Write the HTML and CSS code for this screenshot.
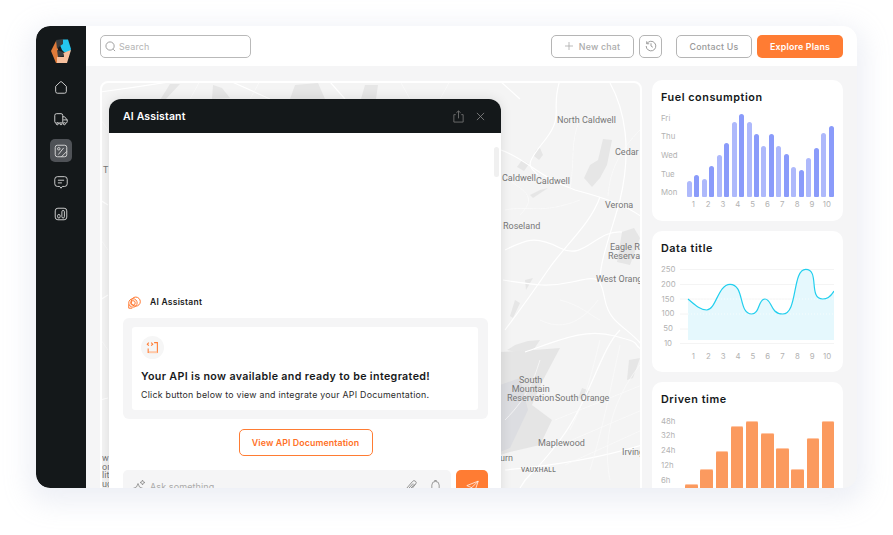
FILE: index.html
```html
<!DOCTYPE html>
<html lang="en">
<head>
<meta charset="utf-8">
<title>AI Assistant</title>
<link rel="stylesheet" href="styles.css">
</head>
<body>
<div class="frame">
  <aside class="sidebar">
    <svg class="logo" viewBox="0 0 20 24">
      <polygon points="5,2 0,12 5,24 7,24 7,2" fill="#e07b3a"/>
      <polygon points="9,6 12,0.500 17,0.500 20,10 19,13 13,13 11,11" fill="#24c5ee"/>
      <polygon points="12,14 20,11 16,24 6,24 6,18 13,18" fill="#f6bf9d"/>
      <polygon points="5,1 12,0 12,5 9,7 6,10" fill="#3a3d3f"/>
      <polygon points="6,11 12,13 13,17 7,18" fill="#3a3d3f"/>
    </svg>
    <nav class="nav">
      <a class="nav-item"><svg viewBox="0 0 18 18" class="nav-icon"><path d="M3 8.200 8 3.400a1.500 1.500 0 0 1 2 0l5 4.800V14a2 2 0 0 1-2 2H5a2 2 0 0 1-2-2Z"/></svg></a>
      <a class="nav-item"><svg viewBox="0 0 18 18" class="nav-icon"><path d="M3.500 13.500a1.500 1.500 0 0 1-1.500-1.500V5a2 2 0 0 1 2-2h5a2 2 0 0 1 2 2v8.500M11 6.500h2l3 3.500v2a1.500 1.500 0 0 1-1.500 1.500H14M5 13.500h3M11 13.500h.8M11.500 10H16"/><circle cx="4.800" cy="14.300" r="1.200"/><circle cx="9" cy="14.300" r="1.200"/><circle cx="12.800" cy="14.300" r="1.200"/></svg></a>
      <a class="nav-item active"><svg viewBox="0 0 18 18" class="nav-icon"><rect x="2.500" y="2.500" width="13" height="13" rx="2.500"/><path d="M12 5.500 6 13"/><circle cx="6.500" cy="6.500" r="1.400"/><path d="M9.500 15.500 15.500 9.500"/></svg></a>
      <a class="nav-item"><svg viewBox="0 0 18 18" class="nav-icon"><path d="M5 3h8a3 3 0 0 1 3 3v5a3 3 0 0 1-3 3h-2.500L9 16l-1.500-2H5a3 3 0 0 1-3-3V6a3 3 0 0 1 3-3Z"/><path d="M5.500 7h7M5.500 10h4.500"/></svg></a>
      <a class="nav-item"><svg viewBox="0 0 18 18" class="nav-icon"><rect x="2.500" y="2.500" width="13" height="13" rx="3"/><rect x="5.200" y="9.500" width="2.800" height="4" rx="1.400"/><rect x="10" y="5" width="2.800" height="8.500" rx="1.400"/></svg></a>
    </nav>
  </aside>

  <div class="main">
    <header class="topbar">
      <label class="search">
        <svg viewBox="0 0 12 12" class="search-icon"><circle cx="5.500" cy="5.500" r="4.500"/><path d="m9 9 2 2"/></svg>
        <span>Search</span>
      </label>
      <div class="top-actions">
        <div class="btn-group">
          <button class="btn new-chat"><svg viewBox="0 0 10 10" class="plus"><path d="M5 0v10M0 5h10"/></svg>New chat</button>
          <button class="btn history"><svg viewBox="0 0 14 14" class="hist-icon"><path d="M2.200 4.200A5.600 5.600 0 1 1 1.400 7M2 1.500v2.900h2.900M7 3.800V7l2.200 1.500"/></svg></button>
        </div>
        <div class="btn-group">
          <button class="btn contact">Contact Us</button>
          <button class="btn explore">Explore Plans</button>
        </div>
      </div>
    </header>

    <div class="content">
      <section class="map">
        <div class="map-layer">
        <svg class="map-art" viewBox="100 81 542 420">
          <g class="patch">
            <path d="M603 139 612 140 607 165 600 178 592 187 584 178 590 165 598 160Z"/>
            <path d="M622 232 634 228 640 238 630 265 617 262Z"/>
            <path d="M536 150 540 148 543 155 539 160 534 156Z"/>
            <path d="M522 160 529 164 524 171 517 167Z"/>
            <path d="M540 190 548 188 533 198 530 195Z"/>
            <path d="M528 341 540 340 530 355 507 350 515 345Z"/>
            <path d="M525 280 533 278 526 290Z"/>
            <path d="M515 300 520 303 513 318 510 316Z"/>
            <path d="M629 360 640 358 633 378 627 380Z"/>
            <path d="M582 388 590 391 585 400 578 398Z"/>
            <path d="M170 84 180 84 165 100 160 100Z"/>
            <path d="M213 85 222 88 230 98 212 99Z"/>
            <path d="M295 85 318 83 325 99 290 99Z"/>
            <path d="M365 85 378 85 376 99 361 99Z"/>
          </g>
          <path class="patch-wide" d="M500 352 534 350 560 348 542 382 532 405 552 420 540 445 510 452 500 455Z"/>
          <path class="patch-dark" d="M500 385 520 378 528 410 510 448 500 452Z"/>
          <g class="road">
            <path d="M501 150C525 158 540 178 575 190 605 198 625 205 642 217"/>
            <path d="M560 80C550 110 565 115 545 140S528 165 538 175"/>
            <path d="M503 280C530 284 545 288 572 282S600 276 605 300 625 325 642 345"/>
            <path d="M525 352C560 340 585 328 615 336S630 342 642 350"/>
            <path d="M600 197C590 225 565 245 548 270S520 310 505 330"/>
            <path d="M505 250C525 240 535 235 560 248S595 230 622 232"/>
            <path d="M610 83C625 110 632 150 620 200 612 230 600 260 600 280"/>
            <path d="M620 330C600 350 590 400 560 440S530 470 520 488"/>
            <path d="M505 470C560 465 610 455 642 445"/>
            <path d="M100 92C130 88 150 85 175 81M230 81 270 99M330 82 345 99M500 81 520 99"/>
            <path d="M100 200 108 205M100 300 108 295M100 400 108 398"/>
          </g>
          <g class="minor">
            <path d="M580 120C570 140 575 160 570 190M640 130C620 150 610 170 608 196M505 210C530 205 540 215 580 200"/>
            <path d="M510 180C520 190 540 195 520 215M560 300C580 305 590 315 600 320M540 320C560 330 580 325 598 300"/>
            <path d="M600 340C590 380 585 400 570 430M620 345C610 390 605 420 590 470M640 365C620 390 600 430 610 480"/>
            <path d="M555 420 642 385M560 445 642 410M565 465 642 430M540 360C535 375 530 395 505 420"/>
            <path d="M200 81 190 99M260 81 250 99M400 81 410 99M450 81 440 99M101 120 108 130M101 240 108 250M101 340 108 350"/>
          </g>
        </svg>
        <span class="pin" style="left:457px;top:35px">North Caldwell</span>
        <span class="pin" style="left:515px;top:67px">Cedar</span>
        <span class="pin" style="left:402px;top:93px">Caldwell</span>
        <span class="pin" style="left:436px;top:96px">Caldwell</span>
        <span class="pin" style="left:505px;top:120px">Verona</span>
        <span class="pin" style="left:403px;top:141px">Roseland</span>
        <span class="pin" style="left:510px;top:162px">Eagle Rock</span>
        <span class="pin" style="left:508px;top:171px">Reservation</span>
        <span class="pin" style="left:496px;top:194px">West Orange</span>
        <span class="pin centered" style="left:407px;top:295px">South<br>Mountain<br>Reservation</span>
        <span class="pin" style="left:455px;top:313px">South Orange</span>
        <span class="pin" style="left:438px;top:358px">Maplewood</span>
        <span class="pin" style="left:522px;top:367px">Irvington</span>
        <span class="pin" style="left:400px;top:373px">urn</span>
        <span class="pin small" style="left:421px;top:385px">VAUXHALL</span>
        <span class="pin" style="left:3px;top:85px">T</span>
        <span class="pin edge" style="left:2px;top:373px">w</span>
        <span class="pin edge" style="left:2px;top:382px">on</span>
        <span class="pin edge" style="left:2px;top:390px">lit</span>
        <span class="pin edge" style="left:2px;top:399px">ug</span>

        <div class="chat">
          <div class="chat-head">
            <h2>AI Assistant</h2>
            <div class="chat-tools">
              <svg viewBox="0 0 14 14" class="tool-icon"><path d="M4 5H2v8h10V5h-2M7 9V1M4.700 3 7 1l2.300 2"/></svg>
              <svg viewBox="0 0 10 10" class="close-icon"><path d="m1 1 8 8M9 1 1 9"/></svg>
            </div>
          </div>
          <div class="thumb"></div>
          <div class="chat-body">
            <div class="sender">
              <svg viewBox="0 0 16 14" class="sender-icon"><circle cx="10" cy="6" r="5.200"/><circle cx="6.800" cy="7.500" r="4.800"/><circle cx="6.800" cy="7.500" r="2.600"/><path d="M2 9v4.500h4"/></svg>
              <span>AI Assistant</span>
            </div>
            <div class="message">
              <div class="message-card">
                <div class="msg-badge"><svg viewBox="0 0 12 12" class="msg-icon"><path d="M7.500 1.500H10.500V10.500H2V7"/><path class="pale" d="M2.500 10.500H10.500"/><path d="m2.600 1.500-1.400 1.400 1.400 1.400M4.800 1.500l1.400 1.400-1.400 1.400"/></svg></div>
                <h3>Your API is now available and ready to be integrated!</h3>
                <p>Click button below to view and integrate your API Documentation.</p>
              </div>
            </div>
            <button class="doc-btn">View API Documentation</button>
            <div class="composer">
              <div class="input">
                <svg viewBox="0 0 14 14" class="spark"><path d="M6 4.500 7.500 8 11 9.500 7.500 11 6 13.500 4.500 11 1 9.500 4.500 8ZM10.500 1l.7 1.800L13 3.500l-1.800.7-.7 1.800-.7-1.800L8 3.500l1.800-.7Z"/></svg>
                <span class="placeholder">Ask something</span>
                <svg viewBox="0 0 12 14" class="clip"><path d="M1.500 9.500 7.500 2.500a2 2 0 0 1 3.200 2.500L5 12a1.300 1.300 0 0 1-2.200-1.500L8 4.500M4 11.500l5.500-6.500"/></svg>
                <svg viewBox="0 0 12 14" class="bell"><path d="M2 10.500V6a4 4 0 0 1 8 0v4.500l1 1.500H1ZM5 2V1h2v1"/></svg>
              </div>
              <button class="send"><svg viewBox="0 0 16 14" class="send-icon"><path d="M1 6.500 15 1 11 13 7 9 1 6.500ZM15 1 7 9l-.5 4 2-2.500"/></svg></button>
            </div>
          </div>
        </div>
        </div>
      </section>

      <div class="cards">
        <section class="card card-fuel">
          <h2 class="card-title">Fuel consumption</h2>
          <div class="fuel-chart">
            <div class="fuel-y"><span>Fri</span><span>Thu</span><span>Wed</span><span>Tue</span><span>Mon</span></div>
            <div class="fuel-bars">
              <i class="b-l" style="height:16px"></i><i class="b-d" style="height:22px"></i>
              <i class="b-l" style="height:18px"></i><i class="b-d" style="height:31px"></i>
              <i class="b-l" style="height:42px"></i><i class="b-d" style="height:54px"></i>
              <i class="b-l" style="height:75px"></i><i class="b-d" style="height:83px"></i>
              <i class="b-l" style="height:75px"></i><i class="b-d" style="height:63px"></i>
              <i class="b-l" style="height:51px"></i><i class="b-d" style="height:63px"></i>
              <i class="b-l" style="height:51px"></i><i class="b-d" style="height:43px"></i>
              <i class="b-l" style="height:30px"></i><i class="b-d" style="height:27px"></i>
              <i class="b-l" style="height:39px"></i><i class="b-d" style="height:49px"></i>
              <i class="b-l" style="height:64px"></i><i class="b-d" style="height:71px"></i>
            </div>
            <div class="x-axis fuel-x"><span>1</span><span>2</span><span>3</span><span>4</span><span>5</span><span>6</span><span>7</span><span>8</span><span>9</span><span>10</span></div>
          </div>
        </section>

        <section class="card card-data">
          <h2 class="card-title">Data title</h2>
          <div class="line-chart">
            <div class="line-y"><span>250</span><span>200</span><span>150</span><span>100</span><span>50</span><span>10</span></div>
            <svg viewBox="680 265 154 80" class="line-svg">
              <path class="grid" d="M680 269.500H834M680 284.500H834M680 299H834M680 314H834M680 329H834M680 343.500H834"/>
              <path class="area" d="M688 299C695 305 700 310 706.700 310 716 310 718 284.300 730 284.300 745 284.300 738 314 751.700 314 760 314 758 299 765 299 772 299 770 314 782.700 314 798 314 792 269.300 805.700 269.300 820 269.300 808 299 822.700 299 828 299 831 296 834 291V340H688Z"/>
              <path class="dots" d="M688 299H834M688 314H834"/>
              <path class="curve" d="M688 299C695 305 700 310 706.700 310 716 310 718 284.300 730 284.300 745 284.300 738 314 751.700 314 760 314 758 299 765 299 772 299 770 314 782.700 314 798 314 792 269.300 805.700 269.300 820 269.300 808 299 822.700 299 828 299 831 296 834 291"/>
            </svg>
            <div class="x-axis line-x"><span>1</span><span>2</span><span>3</span><span>4</span><span>5</span><span>6</span><span>7</span><span>8</span><span>9</span><span>10</span></div>
          </div>
        </section>

        <section class="card card-time">
          <h2 class="card-title">Driven time</h2>
          <div class="time-chart">
            <div class="time-y"><span>48h</span><span>32h</span><span>24h</span><span>12h</span><span>6h</span></div>
            <div class="time-bars">
              <i style="height:11px"></i><i style="height:26px"></i><i style="height:44px"></i><i style="height:69px"></i><i style="height:74px"></i>
              <i style="height:62px"></i><i style="height:47px"></i><i style="height:26px"></i><i style="height:57px"></i><i style="height:74px"></i>
            </div>
          </div>
        </section>
      </div>
    </div>
  </div>
</div>
</body>
</html>
```

FILE: styles.css
```css
* { box-sizing: border-box; }
html, body { height: 100%; }
body {
  margin: 0;
  background: #fff;
  font-family: "Inter", "Liberation Sans", sans-serif;
  overflow: hidden;
}
h2, h3, p { margin: 0; }
button { font-family: inherit; cursor: pointer; }

.frame {
  display: flex;
  width: 821px;
  height: 462px;
  margin: 26px 0 0 36px;
  border-radius: 14px;
  overflow: hidden;
  background: #f5f5f6;
  box-shadow: 0 8px 26px 8px rgba(235, 237, 245, .85);
}

/* sidebar */
.sidebar {
  flex: 0 0 50px;
  display: flex;
  flex-direction: column;
  align-items: center;
  padding-top: 13px;
  background: #14181a;
  border-radius: 14px 0 0 14px;
}
.logo { width: 20px; height: 24px; display: block; }
.nav { display: flex; flex-direction: column; gap: 9.200px; margin-top: 13px; }
.nav-item { display: flex; align-items: center; justify-content: center; width: 22px; height: 22.500px; border-radius: 5px; }
.nav-item.active { background: #4f5257; }
.nav-icon { width: 16px; height: 16px; fill: none; stroke: #e0e0e0; stroke-width: 1; }

/* topbar */
.main { flex: 1; display: flex; flex-direction: column; min-width: 0; }
.topbar {
  flex: 0 0 40px;
  display: flex;
  align-items: center;
  justify-content: space-between;
  padding: 0 14px;
  background: #fff;
}
.search {
  display: flex;
  align-items: center;
  gap: 3px;
  width: 151px;
  height: 23px;
  padding-left: 4px;
  border: 1px solid #b9b9b9;
  border-radius: 5px;
  color: #b4b4b4;
  font-size: 9px;
  letter-spacing: .1px;
}
.search-icon { width: 11px; height: 11px; fill: none; stroke: #8d8d8d; stroke-width: .9; }
.top-actions { display: flex; gap: 14px; }
.btn-group { display: flex; gap: 5px; }
.btn {
  height: 23px;
  padding: 0;
  display: flex;
  align-items: center;
  justify-content: center;
  border: 1px solid #b5b5b5;
  border-radius: 5px;
  background: #fff;
  color: #9a9a9a;
  font-size: 8.800px;
  font-weight: 500;
  letter-spacing: .2px;
}
.new-chat { width: 83px; gap: 6px; color: #aaa; }
.plus { width: 8px; height: 8px; fill: none; stroke: #aaa; stroke-width: 1; }
.history { width: 23px; }
.hist-icon { width: 12px; height: 12px; fill: none; stroke: #8c8c8c; stroke-width: 1; }
.contact { width: 76px; color: #999; }
.explore { width: 86px; border: 0; background: #ff7c33; color: #fff; font-weight: 600; }

/* content */
.content {
  flex: 1;
  display: flex;
  gap: 10px;
  padding: 14px 14px 0;
  min-height: 0;
}
.map {
  position: relative;
  flex: 0 0 542px;
  height: 420px;
  margin-top: 1px;
  background: #f4f4f4;
  border: 2px solid #fff;
  border-radius: 8px 8px 0 0;
  overflow: hidden;
}
.map-layer { position: absolute; left: -2px; top: -2px; width: 542px; height: 420px; }
.map-art { position: absolute; inset: 0; width: 100%; height: 100%; display: block; }
.patch { fill: #e6e6e6; }
.patch-wide { fill: #e5e5e5; }
.patch-dark { fill: #dcdde1; }
.road { fill: none; stroke: #fff; stroke-width: 1.200; }
.minor { fill: none; stroke: #fbfbfb; stroke-width: .7; }
.pin {
  position: absolute;
  color: #777;
  font-family: "Roboto", "Liberation Sans", sans-serif;
  font-size: 9px;
  line-height: 9px;
  white-space: nowrap;
}
.pin.centered { text-align: center; }
.pin.edge { line-height: 8px; }
.pin.small { font-size: 6.500px; font-weight: 500; letter-spacing: .3px; }

/* chat window */
.chat {
  position: absolute;
  left: 9px;
  top: 18px;
  width: 392px;
  height: 420px;
  background: #fff;
  border-radius: 12px 12px 0 0;
  box-shadow: 0 0 12px rgba(0, 0, 0, .1);
}
.chat-head {
  display: flex;
  align-items: center;
  justify-content: space-between;
  height: 34px;
  padding: 0 16px 0 14px;
  background: #14181a;
  border-radius: 12px 12px 0 0;
}
.chat-head h2 { color: #fff; font-size: 10.500px; font-weight: 600; letter-spacing: .15px; }
.chat-tools { display: flex; align-items: center; gap: 11px; }
.tool-icon { width: 13px; height: 13px; fill: none; stroke: #777; stroke-width: .9; }
.close-icon { width: 9px; height: 9px; fill: none; stroke: #8a8a8a; stroke-width: .9; }
.thumb { position: absolute; top: 48px; right: 2px; width: 5px; height: 30px; background: #f0f0f0; border-radius: 3px; }
.chat-body { display: flex; flex-direction: column; padding: 162px 13px 0 14px; }
.sender { display: flex; align-items: center; gap: 9px; padding-left: 4px; height: 14px; }
.sender span { font-size: 8.500px; font-weight: 600; color: #1a1a1a; letter-spacing: .25px; }
.sender-icon { width: 14px; height: 13px; fill: none; stroke: #ff7127; stroke-width: 1.100; }
.message { margin-top: 9px; padding: 9px 10px 9px 9px; background: #f5f5f6; border-radius: 6px; }
.message-card { height: 83px; padding: 9px; background: #fff; border-radius: 3px; }
.msg-badge { display: flex; align-items: center; justify-content: center; width: 23px; height: 23px; border-radius: 50%; background: #f6f6f6; }
.msg-icon { width: 13px; height: 13px; fill: none; stroke: #ff7c33; stroke-width: 1; }
.msg-icon .pale { stroke: #ffc9a8; stroke-width: 1.500; }
.message-card h3 { margin-top: 11px; font-size: 10.700px; line-height: 14px; font-weight: 600; color: #17191b; white-space: nowrap; letter-spacing: .35px; }
.message-card p { margin-top: 5px; font-size: 8.800px; line-height: 12px; color: #2b2b2b; white-space: nowrap; letter-spacing: .25px; }
.doc-btn {
  align-self: center;
  width: 134px;
  height: 27px;
  margin-top: 10px;
  padding: 0;
  border: 1px solid #ff7c33;
  border-radius: 5px;
  background: #fff;
  color: #ff7127;
  font-size: 8.800px;
  font-weight: 600;
  letter-spacing: .1px;
}
.composer { display: flex; gap: 5px; margin-top: 14px; }
.input {
  flex: 1;
  display: flex;
  align-items: center;
  height: 32px;
  padding: 0 10px 0 9px;
  background: #f5f5f6;
  border-radius: 5px;
}
.spark { width: 14px; height: 14px; fill: none; stroke: #888; stroke-width: .8; margin-right: 4px; }
.placeholder { flex: 1; font-size: 9px; color: #aaa; letter-spacing: .1px; }
.clip { width: 12px; height: 14px; fill: none; stroke: #888; stroke-width: .9; margin-right: 13px; }
.bell { width: 11px; height: 14px; fill: none; stroke: #888; stroke-width: .9; }
.send { flex: 0 0 32px; display: flex; align-items: center; justify-content: center; height: 32px; padding: 0; border: 0; background: #ff7c33; border-radius: 5px; }
.send-icon { width: 13px; height: 12px; fill: none; stroke: #fff; stroke-width: .9; }

/* cards */
.cards { flex: 0 0 191px; display: flex; flex-direction: column; gap: 10px; margin-top: 0; }
.card { background: #fff; border-radius: 10px; padding: 11px 9px 0; flex: none; }
.card-fuel { height: 141px; }
.card-data { height: 141px; }
.card-time { height: 140px; }
.card-title { font-size: 10.800px; line-height: 14px; font-weight: 600; color: #14181a; letter-spacing: .55px; }
.fuel-y, .line-y, .time-y, .x-axis { color: #b2b2b2; font-size: 7.800px; }

.fuel-chart {
  display: grid;
  grid-template-columns: 25.800px 147px;
  grid-template-rows: 88.700px auto;
  margin-top: 3.600px;
}
.fuel-y { display: flex; flex-direction: column; }
.fuel-y span { height: 18.700px; line-height: 18.700px; flex: none; }
.fuel-bars { display: flex; align-items: flex-end; justify-content: space-between; }
.fuel-bars i { width: 5px; border-radius: 2.500px 2.500px 1px 1px; }
.b-l { background: #aeb9fb; }
.b-d { background: #8a9bfa; }
.x-axis { display: grid; grid-template-columns: repeat(10, 14.850px); text-align: center; line-height: 11px; }
.fuel-x { grid-column: 2; margin: 2px 0 0 -1px; }

.line-chart {
  display: grid;
  grid-template-columns: 19px 154px;
  grid-template-rows: 80px auto;
  margin-top: 9px;
}
.line-y { display: flex; flex-direction: column; margin-top: -3px; }
.line-y span { width: 14px; text-align: center; height: 14.800px; line-height: 14.800px; flex: none; }
.line-svg { width: 154px; height: 80px; display: block; }
.grid { fill: none; stroke: #f4f4f4; stroke-width: 1; }
.area { fill: #e5f8fd; }
.dots { fill: none; stroke: #fff; stroke-width: .6; stroke-dasharray: 1 2; }
.curve { fill: none; stroke: #22cfee; stroke-width: 1.200; }
.line-x { grid-column: 2; margin: 5.500px 0 0 6px; }

.time-chart {
  display: grid;
  grid-template-columns: 24.300px 149px;
  margin-top: 6.600px;
}
.time-y { display: flex; flex-direction: column; }
.time-y span { height: 14.800px; line-height: 14.800px; flex: none; }
.time-bars {
  display: flex;
  align-items: flex-end;
  justify-content: space-between;
  height: 81px;
  margin-top: 0;
}
.time-bars i {
  width: 12.500px;
  background: #fb9a5f;
  border-radius: 1.500px 1.500px 0 0;
  border-top: 1px solid #ffc5a3;
}
```
